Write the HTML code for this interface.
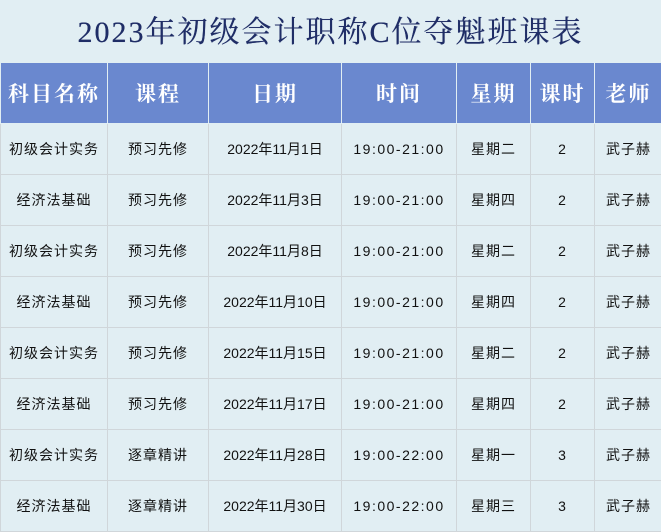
<!DOCTYPE html>
<html><head><meta charset="utf-8"><style>
body{margin:0;width:661px;height:531px;background:#e1eef3;overflow:hidden;font-family:"Liberation Sans","Noto Sans CJK SC",sans-serif;}
h1{margin:0;position:absolute;top:12px;left:0;width:661px;text-align:center;font-family:"Liberation Serif","Noto Serif CJK SC",serif;font-size:30px;font-weight:normal;color:#1f2d66;letter-spacing:2px;line-height:42px;text-shadow:0 0 0.4px #1f2d66;}
table{position:absolute;top:62px;left:0;border-collapse:collapse;table-layout:fixed;width:662px;}
td,th{border:1px solid #d0d6da;text-align:center;padding:0;font-size:14px;color:#111;letter-spacing:1px;}
th{background:#6a88cf;color:#fff;height:60px;font-family:"Liberation Serif","Noto Serif CJK SC",serif;font-size:21px;font-weight:bold;letter-spacing:2px;border-color:#e1eef3;}
td{height:50px;}
td.t{letter-spacing:1.5px;}
td.d{letter-spacing:0;}
</style></head><body>
<h1>2023年初级会计职称C位夺魁班课表</h1>
<table>
<colgroup><col style="width:107px"><col style="width:101px"><col style="width:133px"><col style="width:115px"><col style="width:74px"><col style="width:64px"><col style="width:68px"></colgroup>
<tr><th>科目名称</th><th>课程</th><th>日期</th><th>时间</th><th>星期</th><th>课时</th><th>老师</th></tr>
<tr><td>初级会计实务</td><td>预习先修</td><td class="d">2022年11月1日</td><td class="t">19:00-21:00</td><td>星期二</td><td>2</td><td>武子赫</td></tr>
<tr><td>经济法基础</td><td>预习先修</td><td class="d">2022年11月3日</td><td class="t">19:00-21:00</td><td>星期四</td><td>2</td><td>武子赫</td></tr>
<tr><td>初级会计实务</td><td>预习先修</td><td class="d">2022年11月8日</td><td class="t">19:00-21:00</td><td>星期二</td><td>2</td><td>武子赫</td></tr>
<tr><td>经济法基础</td><td>预习先修</td><td class="d">2022年11月10日</td><td class="t">19:00-21:00</td><td>星期四</td><td>2</td><td>武子赫</td></tr>
<tr><td>初级会计实务</td><td>预习先修</td><td class="d">2022年11月15日</td><td class="t">19:00-21:00</td><td>星期二</td><td>2</td><td>武子赫</td></tr>
<tr><td>经济法基础</td><td>预习先修</td><td class="d">2022年11月17日</td><td class="t">19:00-21:00</td><td>星期四</td><td>2</td><td>武子赫</td></tr>
<tr><td>初级会计实务</td><td>逐章精讲</td><td class="d">2022年11月28日</td><td class="t">19:00-22:00</td><td>星期一</td><td>3</td><td>武子赫</td></tr>
<tr><td>经济法基础</td><td>逐章精讲</td><td class="d">2022年11月30日</td><td class="t">19:00-22:00</td><td>星期三</td><td>3</td><td>武子赫</td></tr>
</table>
</body></html>
